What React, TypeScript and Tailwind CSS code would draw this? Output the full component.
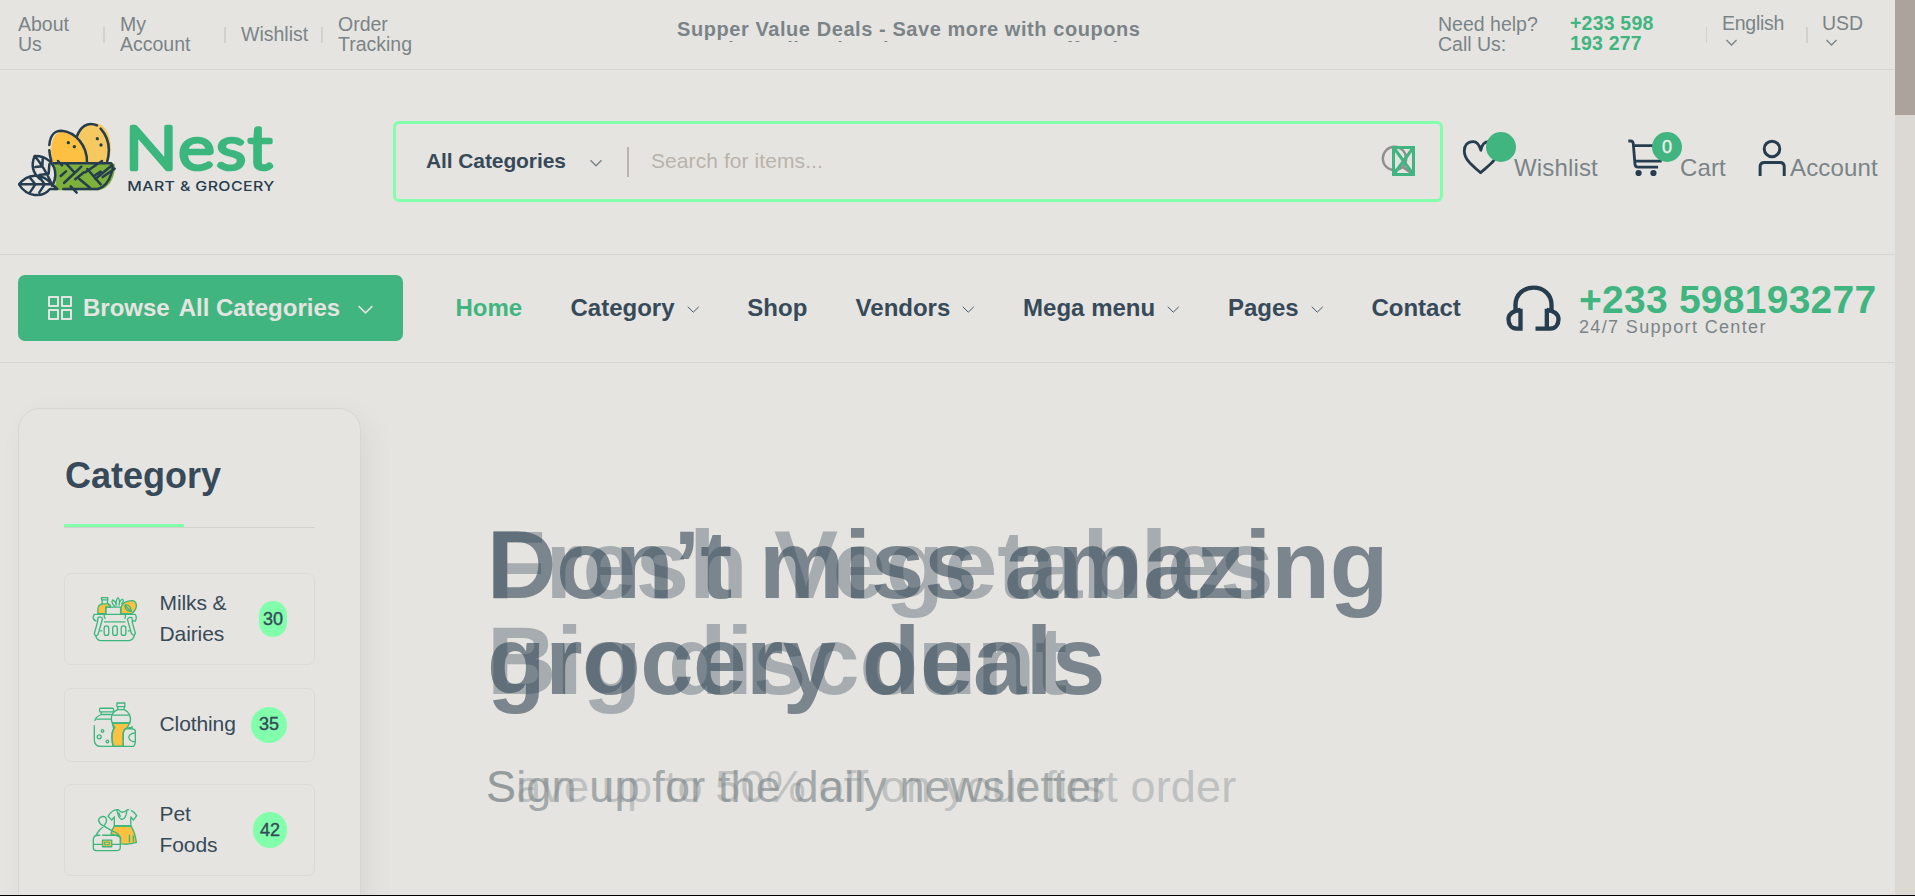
import React from "react";

type IconProps = { className?: string };

function Chevron({ className = "", strokeWidth = 1.5 }: IconProps & { strokeWidth?: number }) {
  return (
    <svg viewBox="0 0 12 7" fill="none" stroke="currentColor" strokeWidth={strokeWidth} className={className}>
      <path d="M0.5 0.8 6 6.2 11.5 0.8" />
    </svg>
  );
}

function Logo() {
  return (
    <svg viewBox="54 366 771 231" className="-mt-[5px] h-[77px] w-[257px] shrink-0">
      <path d="M158 492C146 440 158 398 190 396C232 398 262 446 262 492Z" fill="#fdc040" />
      <path d="M232 412C242 384 262 372 284 372C318 374 334 412 333 452Q331 474 324 492H264C262 460 250 432 232 412Z" fill="#f6c860" />
      <path d="M158 494H344C348 530 330 572 290 574H160C172 548 172 520 158 494Z" fill="#7eb13b" />
      <g fill="none" stroke="#253d4e" strokeWidth="7.5" strokeLinecap="round" strokeLinejoin="round">
        <path d="M148 438C150 410 164 395 184 395C226 398 262 440 261 490" />
        <path d="M148 454Q149 470 154 486M230 414C240 385 262 366 291 379M302 389C326 416 332 452 321 490" />
        <path d="M160 493H334Q342 500 334 524Q322 562 294 570H190M344 509 308 534M174 486 186 499M198 493 222 519M198 517 182 531M244 503 192 552M252 520 226 541M238 540 270 566M306 486 256 520M262 510 302 556M302 518 286 528M334 500 286 540M212 562 230 581" />
        <path d="M104 471C138 470 166 492 166 528Q166 546 156 560M104 471C92 500 98 522 120 540M104 471Q132 504 152 548M128 481 127 502 106 504M148 496 146 524 118 528" />
        <path d="M57 556C82 524 124 520 152 552L172 570H150C126 598 80 594 57 556ZM57 556H154M90 536 106 556 90 580M118 534 134 556 118 580" />
      </g>
      <g fill="#253d4e">
        <circle cx="205" cy="431" r="5" />
        <circle cx="223" cy="443" r="5" />
        <circle cx="292" cy="419" r="5" />
        <circle cx="303" cy="438" r="5" />
      </g>
      <text x="376" y="511" textLength="446" lengthAdjust="spacingAndGlyphs" fill="#3bb77e" stroke="#3bb77e" strokeWidth="14" strokeLinejoin="round" strokeLinecap="round" className="font-['Lato',sans-serif] text-[180px] font-light tracking-[6px]">
        Nest
      </text>
      <text x="382" y="576" textLength="442" lengthAdjust="spacingAndGlyphs" fill="#253d4e" className="font-['Inter',sans-serif] text-[41px] font-medium tracking-[1px]">
        MART &amp; GROCERY
      </text>
    </svg>
  );
}

function SearchGlyph() {
  return (
    <svg viewBox="1381 146 36 33" fill="none" className="h-[33px] w-9 shrink-0">
      <circle cx="1394.5" cy="159.500" r="11.700" stroke="#8f8f8f" strokeWidth="2.400" />
      <path d="M1403 168 1413 175" stroke="#8f8f8f" strokeWidth="2.800" />
      <path d="M1393.500 148.500H1413.500V175.500H1393.500ZM1394 149 1413 175M1413 149 1394 175" stroke="#41b580" strokeWidth="3" />
    </svg>
  );
}

function HeartIcon() {
  return (
    <svg viewBox="276 58 112 112" fill="none" stroke="#253d4e" strokeWidth="8.500" strokeLinejoin="round" className="h-[37px] w-[37px]">
      <path d="M333 92C328 74 322 66 310 66C292 66 283 78 283 94C283 122 312 142 332 160C354 140 384 122 384 94C384 78 374 66 358 66C344 66 336 74 333 92Z" />
    </svg>
  );
}

function CartIcon() {
  return (
    <svg viewBox="776 56 112 112" fill="none" stroke="#253d4e" strokeWidth="8.500" className="h-[37px] w-[37px]">
      <path d="M777 62H784Q791 62 792 70L797 132Q798 141 806 141H867M792 76H882L874 123H798" />
      <circle cx="808" cy="159" r="9.500" fill="#253d4e" stroke="none" />
      <circle cx="853" cy="159" r="9.500" fill="#253d4e" stroke="none" />
    </svg>
  );
}

function UserIcon() {
  return (
    <svg viewBox="1162 56 84 112" fill="none" stroke="#253d4e" strokeWidth="9" className="h-[37px] w-7">
      <circle cx="1204" cy="86" r="23.500" />
      <path d="M1168 168V140Q1168 127 1181 127H1228Q1241 127 1241 140V168" />
    </svg>
  );
}

function HeadsetIcon() {
  return (
    <svg viewBox="410 496 164 138" fill="none" stroke="#253d4e" strokeWidth="13" className="h-[46px] w-[55px] shrink-0">
      <path d="M438 572V556C438 524 462 504 492 504C522 504 546 524 546 556V572" />
      <path d="M453 567V627H442C426 627 417 614 417 599C417 584 430 573 453 571M532 567V627M498 627H542C558 627 567 614 567 599C567 584 554 573 532 571" />
    </svg>
  );
}

function BasketIcon() {
  return (
    <svg viewBox="275 618 138 140" fill="none" stroke="#3bb77e" strokeWidth="4" strokeLinejoin="round" strokeLinecap="round" className="h-[46px] w-[46px] shrink-0">
      <path d="M292 672V658Q292 644 306 642H322Q332 646 330 652H316V672Z" fill="#fdc040" />
      <path d="M362 672V654Q366 632 398 632Q410 634 409 650Q406 664 394 672Z" fill="#fdc040" />
      <path d="M303 623H322V630H303ZM305 630V639Q305 642 300 644M321 630V638Q322 642 328 645M316 672V652H361V672M344 650Q330 638 337 630Q346 634 348 646Q346 630 353 623Q360 630 356 646Q358 632 366 628Q374 632 364 642M374 646Q384 642 390 652L394 664Q384 668 376 656ZM374 646 392 664" />
      <path d="M281 674H405Q412 682 406 694H400M286 694Q276 690 278 680L281 674M312 697H374M312 674Q309 680 314 686M374 674Q378 680 374 686" />
      <path d="M292 684Q302 678 306 688L292 736Q284 742 281 733L290 700ZM396 684Q384 680 382 690L394 732Q402 742 406 732L397 700Z" />
      <path d="M285 738Q288 752 300 754H386Q400 752 403 738M300 724H304M384 724H388" />
      <rect x="311" y="709" width="14" height="29" rx="7" />
      <rect x="337" y="709" width="14" height="29" rx="7" />
      <rect x="363" y="709" width="14" height="29" rx="7" />
    </svg>
  );
}

function BottlesIcon() {
  return (
    <svg viewBox="275 184 138 140" fill="none" stroke="#3bb77e" strokeWidth="4" strokeLinejoin="round" strokeLinecap="round" className="h-[46px] w-[46px] shrink-0">
      <path d="M336 248H389L381 262Q370 266 369 280V319H338Q330 290 340 266Z" fill="#fdc040" />
      <path d="M350 187H374V198H350ZM352 198V207Q333 216 333 232Q332 240 336 248H389Q394 236 388 222Q384 212 372 207V198M352 207H372M334 224H388" />
      <path d="M336 248 343 262Q330 276 336 302L339 319" />
      <path d="M298 203H338Q342 208 338 214H298Q295 208 298 203ZM302 214V222Q284 230 283 240M332 222H302M288 236H331M281 256 281 300Q282 319 300 319H400Q406 316 406 300V274Q406 266 396 266H376Q370 270 369 280V300M369 308V319M386 262H396V258M406 278Q386 280 386 292Q388 304 406 305" />
      <circle cx="296" cy="290" r="6" />
      <circle cx="306" cy="272" r="4" />
      <circle cx="321" cy="304" r="4" />
    </svg>
  );
}

function OutfitIcon() {
  return (
    <svg viewBox="275 500 138 140" fill="none" stroke="#3bb77e" strokeWidth="4" strokeLinejoin="round" strokeLinecap="round" className="h-[46px] w-[46px] shrink-0">
      <path d="M342 558H393Q406 580 409 608Q386 616 361 612V592L332 582Q334 568 342 558Z" fill="#fdc040" />
      <path d="M342 557V530L334 540L323 528Q336 508 350 508H354Q366 524 382 508H386M392 557V530L400 540L410 526Q404 516 394 511M350 510Q354 536 366 538Q378 534 380 512M356 518 360 528M388 586V606M400 588V604M342 557H392" />
      <path d="M287 584Q294 570 312 556Q322 542 316 532Q304 524 295 536Q292 544 300 552L338 574Q358 580 360 596V626Q358 633 350 633H286Q278 632 278 624V598Q280 586 292 586H298M306 586H354M278 614H304M336 614H360" />
      <path d="M306 601H334V621H306Z" fill="#fdc040" />
      <path d="M313 607H327V615H313Z" fill="#fdc040" strokeWidth="3" />
    </svg>
  );
}

function Separator({ className = "w-[2px]" }: IconProps) {
  return <span className={`h-4 shrink-0 bg-[#d3d1cd] ${className}`} />;
}

function TopBar() {
  return (
    <div className="flex h-[70px] items-center border-b border-[#d6d4d0] pl-[18px] text-[19.5px] leading-[19.5px] text-[#7a8488]">
      <span className="w-[85px]">About<br />Us</span>
      <Separator />
      <span className="ml-[15px] w-[104px]">My<br />Account</span>
      <Separator />
      <span className="ml-[15px] w-[80px]">Wishlist</span>
      <Separator />
      <span className="ml-[15px] w-[339px]">Order<br />Tracking</span>
      <div className="mb-[8px] h-[23px] w-[760px] overflow-hidden text-[20px] leading-[20px] font-bold tracking-[0.57px] whitespace-nowrap">
        <p>Supper Value Deals - Save more with coupons</p>
        <p>Trendy 25silver jewelry, save up 35% off today</p>
      </div>
      <span className="ml-px w-[132px]">Need help?<br />Call Us:</span>
      <span className="mb-[2px] w-[136px] font-bold tracking-[0.2px] text-[#41b580]">+233 598<br />193 277</span>
      <Separator className="w-px" />
      <span className="mb-[2px] ml-[15px] flex w-[84px] flex-col tracking-[-0.25px]">
        English
        <Chevron className="mt-[5px] ml-[4px] h-[7px] w-[11px]" />
        <span className="h-[7px]" />
      </span>
      <Separator />
      <span className="mb-[2px] ml-[14px] flex flex-col">
        USD
        <Chevron className="mt-[5px] ml-[4px] h-[7px] w-[11px]" />
        <span className="h-[7px]" />
      </span>
    </div>
  );
}

function Action({ icon, label, badge, className = "" }: { icon: React.ReactNode; label: string; badge?: string; className?: string }) {
  return (
    <div className={`relative flex shrink-0 items-end text-[24px] leading-[27px] tracking-[0.15px] text-[#7a8488] ${className}`}>
      {icon}
      {badge !== undefined && (
        <span className="absolute -top-[7px] left-[24px] flex size-[30px] items-center justify-center rounded-full bg-[#41b580] text-[18px] font-medium text-[#f1efeb] [-webkit-text-stroke:0.4px]">
          {badge}
        </span>
      )}
      <span className="-mb-[5px]">{label}</span>
    </div>
  );
}

function Header() {
  return (
    <div className="flex h-[185px] items-center border-b border-[#d6d4d0] pl-[18px]">
      <Logo />
      <div className="-mt-[1px] ml-[118px] flex h-[81px] w-[1050px] shrink-0 items-center rounded-[6px] border-[3px] border-[#82ffab] pr-[23px] pl-[30px]">
        <span className="-mt-[2px] w-[164px] text-[21px] leading-6 font-bold tracking-[-0.1px] text-[#364a5a]">All Categories</span>
        <Chevron className="mt-[2px] h-[8px] w-[12px] text-[#7a8488]" />
        <span className="ml-[25px] h-[30px] w-[2px] bg-[#bab5ae]" />
        <span className="-mt-[2px] ml-[22px] flex-1 text-[21px] leading-6 tracking-[0.08px] text-[#b9b2ab]">Search for items...</span>
        <SearchGlyph />
      </div>
      <Action icon={<HeartIcon />} label="Wishlist" badge="" className="-mt-[9px] ml-[19px] w-[166px] gap-[15px]" />
      <Action icon={<CartIcon />} label="Cart" badge="0" className="-mt-[9px] w-[130px] gap-[15px]" />
      <Action icon={<UserIcon />} label="Account" className="-mt-[9px] gap-[4px]" />
    </div>
  );
}

const links = [
  { label: "Home", active: true },
  { label: "Category", menu: true },
  { label: "Shop" },
  { label: "Vendors", menu: true },
  { label: "Mega menu", menu: true },
  { label: "Pages", menu: true },
  { label: "Contact" },
];

function NavBar() {
  return (
    <div className="flex h-[108px] items-center border-b border-[#d6d4d0] pb-[2px] pl-[18px] text-[24px] leading-7 font-bold text-[#364a5a]">
      <button className="flex h-[66px] w-[385px] shrink-0 items-center rounded-[7px] bg-[#41b580] pl-[30px] text-[#e6e4e0]">
        <span className="grid size-6 grid-cols-2 gap-[2px]">
          <i className="rounded-[1px] border-2 border-[#e6e4e0]" />
          <i className="rounded-[1px] border-2 border-[#e6e4e0]" />
          <i className="rounded-[1px] border-2 border-[#e6e4e0]" />
          <i className="rounded-[1px] border-2 border-[#e6e4e0]" />
        </span>
        <span className="ml-[11px]">Browse</span>
        <span className="ml-[9px]">All Categories</span>
        <Chevron className="mt-[3px] ml-[18px] h-[9px] w-[15px]" strokeWidth={1.2} />
      </button>
      <nav className="ml-[52.5px] flex w-[1050.5px] shrink-0 gap-[48.3px]">
        {links.map((l) => (
          <a key={l.label} className={`flex items-center whitespace-nowrap ${l.active ? "text-[#41b580]" : ""}`}>
            {l.label}
            {l.menu && <Chevron className="mt-[4px] ml-3 h-[7px] w-[12.5px]" strokeWidth={0.9} />}
          </a>
        ))}
      </nav>
      <HeadsetIcon />
      <div className="mt-[2px] ml-[18px]">
        <p className="text-[39px] leading-[36px] tracking-[0.25px] text-[#41b580]">+233 598193277</p>
        <p className="text-[18px] leading-[18px] font-normal tracking-[1.35px] text-[#7a8488]">24/7 Support Center</p>
      </div>
    </div>
  );
}

const categories = [
  { lines: ["Milks &", "Dairies"], count: 30, icon: <BasketIcon />, box: "h-[92px]", pill: "w-7" },
  { lines: ["Clothing"], count: 35, icon: <BottlesIcon />, box: "h-[74px]", pill: "w-9" },
  { lines: ["Pet", "Foods"], count: 42, icon: <OutfitIcon />, box: "h-[92px]", pill: "w-[34px]" },
];

function Sidebar() {
  return (
    <aside className="mt-[45px] ml-[18px] h-[700px] w-[343px] shrink-0 rounded-[22px] border border-[#d8d6d2] px-[45px] pt-[45px] shadow-[8px_8px_30px_rgba(0,0,0,0.05)]">
      <h5 className="h-[74px] border-b border-[#d3d1cd] text-[36px] leading-[43px] font-bold text-[#364a5a]">
        <span className="block pl-px">Category</span>
        <span className="mt-[27px] block h-[3px] w-[120px] bg-[#82ffab]" />
      </h5>
      <ul className="mt-[45px] flex flex-col gap-[22.5px]">
        {categories.map((c) => (
          <li key={c.count} className={`flex items-center rounded-[7px] border border-[#dddbd7] pr-[27px] pl-[27px] ${c.box}`}>
            {c.icon}
            <span className="-mt-[2px] ml-[21.5px] flex-1 text-[21px] leading-[31px] tracking-[-0.1px] text-[#364a5a]">
              {c.lines.map((t) => (
                <span key={t} className="block">{t}</span>
              ))}
            </span>
            <span className={`flex h-9 items-center justify-center rounded-full bg-[#82ffab] text-[18px] text-[#364a5a] [-webkit-text-stroke:0.4px] ${c.pill}`}>{c.count}</span>
          </li>
        ))}
      </ul>
    </aside>
  );
}

function Slide({ title, text, className, tracking }: { title: string[]; text: string; className: string; tracking: string[] }) {
  return (
    <div className={`col-start-1 row-start-1 whitespace-nowrap ${className}`}>
      <h1 className="pl-px text-[96px] leading-[96px] font-bold text-[#364a5a]">
        <span className={tracking[0]}>{title[0]}</span>
        <br />
        <span className={tracking[1]}>{title[1]}</span>
      </h1>
      <p className="mt-[52px] text-[45px] leading-[52px] tracking-[0.15px] text-[#7a8488]">{text}</p>
    </div>
  );
}

export default function App() {
  return (
    <div className="flex h-[896px] w-[1915px] overflow-hidden border-b border-black bg-[#e6e4e0] font-['Liberation_Sans',Arial,sans-serif]">
      <div className="w-[1895px] shrink-0">
        <TopBar />
        <Header />
        <NavBar />
        <main className="flex">
          <Sidebar />
          <section className="mt-[154px] ml-[125px] grid content-start">
            <Slide
              className="opacity-[0.36]"
              title={["Fresh Vegetables", "Big discount"]}
              tracking={["tracking-[-0.2px]", "tracking-[-0.1px]"]}
              text="Save up to 50% off on your first order"
            />
            <Slide
              className="opacity-[0.61]"
              title={["Don’t miss amazing", "grocery deals"]}
              tracking={["tracking-normal", "tracking-[-0.5px]"]}
              text="Sign up for the daily newsletter"
            />
          </section>
        </main>
      </div>
      <div className="w-5 shrink-0 bg-[#dcd9d4]">
        <div className="h-[115px] bg-[#aca49c]" />
      </div>
    </div>
  );
}
